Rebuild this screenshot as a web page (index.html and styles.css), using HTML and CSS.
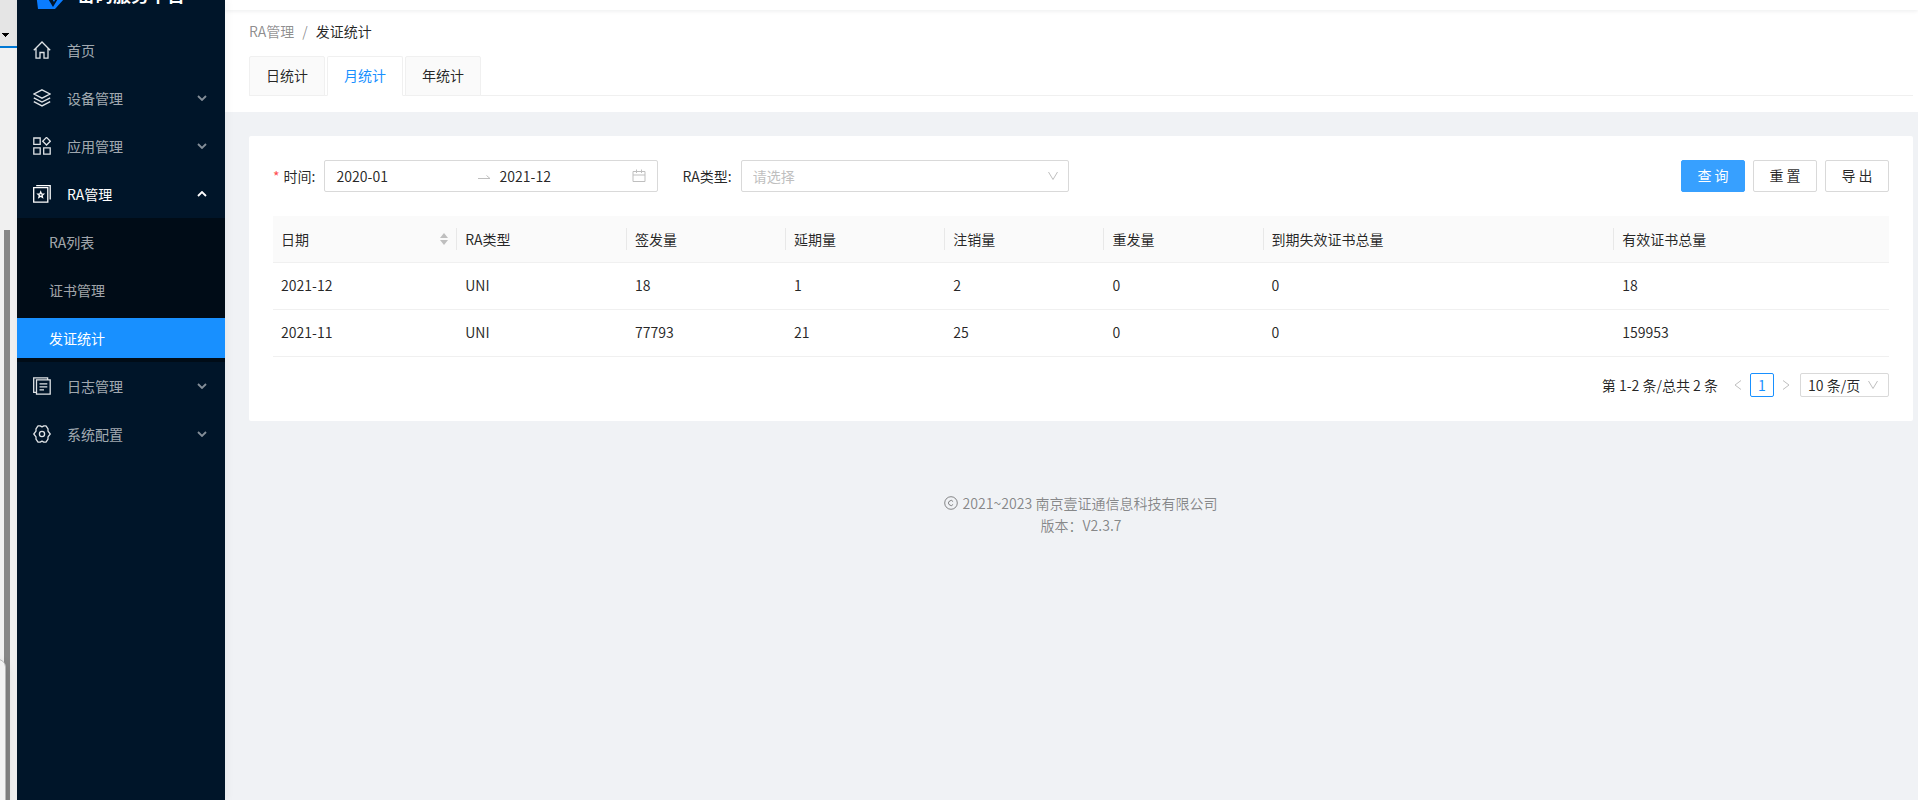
FILE: index.html
```html
<!DOCTYPE html>
<html lang="zh-CN">
<head>
<meta charset="utf-8">
<title>发证统计</title>
<link rel="stylesheet" href="styles.css">
</head>
<body>
<div class="app">
  <div class="edge" aria-hidden="true">
    <div class="edge-top"><svg width="7" height="4" viewBox="0 0 7 4" shape-rendering="crispEdges"><path d="M0 0h7v1H6v1H5v1H4v1H3V3H2V2H1V1H0z"/></svg></div>
    <div class="edge-body"><div class="edge-thumb"></div><div class="edge-panel"></div></div>
  </div>

  <aside class="sider">
    <div class="brand">
      <svg width="30" height="30" viewBox="0 0 30 30"><path fill="#0a7cff" d="M0 6 15 0l14 6v14l-9 10H3z"/><path fill="#00152a" d="M12 18l6 10 6-10-3 1-2 4-3-5z"/></svg>
      <span class="brand-name">密码服务平台</span>
    </div>
    <nav class="menu">
      <a class="item" href="#"><svg class="ico" viewBox="0 0 18 18"><path d="M.8 9.300 9 1l8.200 8.300M3 7.500v9.700h4v-5.700h4v5.700h4V7.500"/></svg><span>首页</span></a>
      <a class="item" href="#"><svg class="ico" viewBox="0 0 18 18"><path d="M9 .8 17 5 9 9.200 1 5zM.8 8.800 9 13l8.200-4.200M.8 12.600 9 16.900l8.200-4.300"/></svg><span>设备管理</span><svg class="chev" viewBox="0 0 10 6"><path d="M1 1l4 4 4-4"/></svg></a>
      <a class="item" href="#"><svg class="ico" viewBox="0 0 18 18"><path d="M.8 1h6.400v6.400H.8zM.8 10.800h6.400v6.400H.8zM10.700 10.800h6.500v6.400h-6.500zM13.500.4 17.300 4.200 13.500 8 9.700 4.200z"/></svg><span>应用管理</span><svg class="chev" viewBox="0 0 10 6"><path d="M1 1l4 4 4-4"/></svg></a>
      <a class="item open" href="#"><svg class="ico" viewBox="0 0 18 18"><path d="M.7 2.700h14.100v14.500H.7zM3.200.7h14v13.800"/><path d="M7.700 7l.8 1.900 2 .2-1.500 1.300.5 2-1.800-1.100-1.800 1.100.5-2L4.900 9.100l2-.2z"/></svg><span>RA管理</span><svg class="chev" viewBox="0 0 10 6"><path d="M1 5l4-4 4 4"/></svg></a>
      <div class="submenu">
        <a class="item" href="#">RA列表</a>
        <a class="item" href="#">证书管理</a>
        <a class="item selected" href="#" aria-current="page">发证统计</a>
      </div>
      <a class="item" href="#"><svg class="ico" viewBox="0 0 18 18"><path d="M3.500 2.900h13.700v14.300H3.500zM3.500 15.300H.7V.8h13.900v2M6.500 6.900h7.800M6.500 9.900h7.800M6.500 12.900h4.500"/></svg><span>日志管理</span><svg class="chev" viewBox="0 0 10 6"><path d="M1 1l4 4 4-4"/></svg></a>
      <a class="item" href="#"><svg class="ico" viewBox="0 0 18 18"><path d="M5 .9h2.200L9 1.900l1.800-1H13l2 2.900v2.400L17.200 9 15 11.800v2.400L13 17.100h-2.200L9 16.100l-1.800 1H5l-2-2.900v-2.400L.8 9 3 6.200V3.800z" stroke-linejoin="round"/><circle cx="9" cy="9" r="2.600"/></svg><span>系统配置</span><svg class="chev" viewBox="0 0 10 6"><path d="M1 1l4 4 4-4"/></svg></a>
    </nav>
  </aside>

  <div class="main">
    <header class="topbar"></header>
    <div class="page-head">
      <nav class="crumbs" aria-label="breadcrumb"><a href="#">RA管理</a><span class="sep">/</span><span class="here">发证统计</span></nav>
      <div class="tabs" role="tablist">
        <button class="tab" role="tab">日统计</button>
        <button class="tab active" role="tab" aria-selected="true">月统计</button>
        <button class="tab" role="tab">年统计</button>
      </div>
    </div>

    <main class="card">
      <form class="filters">
        <div class="field">
          <label for="from"><span class="req">*</span>时间:</label>
          <div class="range">
            <input id="from" type="text" value="2020-01">
            <svg class="arrow" width="14" height="14" viewBox="0 0 14 14"><path d="M1 9.500h12L9.500 6.500"/></svg>
            <input type="text" value="2021-12" aria-label="结束时间">
            <svg class="cal" width="14" height="14" viewBox="0 0 14 14"><path d="M1 2.500h12v10H1zM1 6h12M4.500.5v3.500M9.500.5v3.500"/></svg>
          </div>
        </div>
        <div class="field">
          <label for="type">RA类型:</label>
          <div class="pick">
            <select id="type"><option>请选择</option></select>
            <svg width="12" height="12" viewBox="0 0 12 12"><path d="M1.500 2 6 9.500 10.500 2"/></svg>
          </div>
        </div>
        <div class="actions">
          <button class="btn primary" type="button">查 询</button>
          <button class="btn" type="button">重 置</button>
          <button class="btn" type="button">导 出</button>
        </div>
      </form>

      <table class="grid">
        <colgroup><col class="c-date"><col class="c-type"><col class="c-num"><col class="c-num"><col class="c-num"><col class="c-num"><col class="c-exp"><col class="c-valid"></colgroup>
        <thead>
          <tr>
            <th><div class="cell">日期<svg width="8" height="12" viewBox="0 0 8 12"><path d="M4 0l4 5H0zM4 12l4-5H0z"/></svg></div></th>
            <th><div class="cell">RA类型</div></th><th><div class="cell">签发量</div></th><th><div class="cell">延期量</div></th><th><div class="cell">注销量</div></th><th><div class="cell">重发量</div></th><th><div class="cell">到期失效证书总量</div></th><th><div class="cell">有效证书总量</div></th>
          </tr>
        </thead>
        <tbody>
          <tr><td>2021-12</td><td>UNI</td><td>18</td><td>1</td><td>2</td><td>0</td><td>0</td><td>18</td></tr>
          <tr><td>2021-11</td><td>UNI</td><td>77793</td><td>21</td><td>25</td><td>0</td><td>0</td><td>159953</td></tr>
        </tbody>
      </table>

      <div class="pager">
        <span class="total">第 1-2 条/总共 2 条</span>
        <button class="step" type="button" aria-label="上一页"><svg width="8" height="12" viewBox="0 0 8 12"><path d="M7 1.500 1 6l6 4.500"/></svg></button>
        <button class="num" type="button" aria-current="page">1</button>
        <button class="step" type="button" aria-label="下一页"><svg width="8" height="12" viewBox="0 0 8 12"><path d="M1 1.500 7 6l-6 4.500"/></svg></button>
        <div class="pick small">
          <select aria-label="每页条数"><option>10 条/页</option></select>
          <svg width="12" height="12" viewBox="0 0 12 12"><path d="M1.500 2 6 9.500 10.500 2"/></svg>
        </div>
      </div>
    </main>

    <footer class="foot">
      <div class="copy"><svg width="14" height="14" viewBox="0 0 14 14"><circle cx="7" cy="7" r="6.300"/><path d="M9.100 5.600A2.500 2.500 0 1 0 9.100 8.400"/></svg><span>2021~2023 南京壹证通信息科技有限公司</span></div>
      <div>版本：V2.3.7</div>
    </footer>
  </div>
</div>
</body>
</html>
```

FILE: styles.css
```css
* { box-sizing: border-box; }
body {
  margin: 0;
  background: #f0f2f5;
  color: rgba(0, 0, 0, .85);
  font: 14px/22px "Noto Sans CJK SC", sans-serif;
}
button, input, select { font: inherit; color: inherit; margin: 0; }
a { color: inherit; text-decoration: none; }
svg { flex: none; fill: none; stroke: currentColor; }

.app { display: flex; min-height: 100vh; overflow: hidden; }

/* window edge */
.edge { display: flex; flex-direction: column; width: 17px; background: #f0f0f0; }
.edge-top { height: 48px; padding: 31px 0 0 2px; background: #e5e5e5; border-bottom: 2px solid #0078d4; line-height: 0; }
.edge-top svg { fill: #000; stroke: none; }
.edge-body { position: relative; flex: 1; padding: 182px 0 0 4px; display: flex; overflow: hidden; }
.edge-thumb { width: 6px; background: #868686; }
.edge-panel {
  position: absolute; right: 11px; top: 611px; bottom: -8px; width: 24px;
  background: #f3f3f3; border: 1px solid #b8b8b8; border-radius: 8px;
  box-shadow: 0 4px 10px rgba(0, 0, 0, .16);
}

/* sidebar */
.sider { position: relative; z-index: 2; flex: none; width: 208px; background: #001529; box-shadow: 2px 0 8px rgba(29, 35, 41, .05); }
.brand { display: flex; align-items: center; gap: 12px; height: 32px; margin-top: -22px; padding-left: 18px; color: #fff; }
.brand svg { stroke: none; }
.brand-name { font-size: 18px; font-weight: 700; white-space: nowrap; }
.menu { padding-top: 16px; color: rgba(255, 255, 255, .65); }
.item { display: flex; align-items: center; gap: 16px; height: 40px; margin: 4px 0 8px; padding: 0 18px 0 16px; }
.ico { width: 18px; height: 18px; color: #dfe3e6; stroke-width: 1.300; }
.chev { width: 10px; height: 6px; margin-left: auto; stroke-width: 1.800; opacity: .8; }
.open { color: #fff; margin-bottom: 4px; }
.open .ico { color: #fff; }
.open .chev { opacity: 1; }
.submenu { background: #000c17; padding: 4px 0; margin-bottom: 4px; display: grid; gap: 8px; }
.submenu .item { margin: 0; padding-left: 32px; }
.submenu .selected { background: #1890ff; color: #fff; }

/* page */
.main { flex: 1; min-width: 0; }
.topbar { position: relative; height: 10px; background: #fff; box-shadow: 0 1px 4px rgba(0, 21, 41, .08); }
.page-head { padding: 10px 5px 16px 24px; background: #fff; }
.crumbs { display: flex; gap: 8px; color: rgba(0, 0, 0, .45); }
.here { color: rgba(0, 0, 0, .85); }
.tabs { display: flex; gap: 2px; margin-top: 14px; box-shadow: inset 0 -1px #f0f0f0; }
.tab { height: 40px; padding: 0 16px 2px; background: #fafafa; border: 1px solid #f0f0f0; border-radius: 2px 2px 0 0; }
.active { background: #fff; border-bottom-color: #fff; color: #1890ff; }

.card { margin: 24px 5px 0 24px; padding: 24px; background: #fff; border-radius: 2px; }
.filters { display: flex; gap: 24px; margin-bottom: 24px; }
.field { display: flex; align-items: center; gap: 9px; }
.req { margin-right: 4px; color: #ff4d4f; }
.range { display: flex; align-items: center; width: 334px; height: 32px; padding: 0 11px; border: 1px solid #d9d9d9; border-radius: 2px; }
.range input { flex: 1; min-width: 0; padding: 0; border: 0; background: none; outline: 0; }
.arrow { margin: 0 8px; color: #bfbfbf; }
.cal { color: #bfbfbf; }
.pick { position: relative; width: 328px; }
.pick select { width: 100%; height: 32px; padding: 0 11px; appearance: none; background: #fff; border: 1px solid #d9d9d9; border-radius: 2px; color: #bfbfbf; }
.pick svg { position: absolute; right: 10px; top: 50%; margin-top: -6px; color: #bfbfbf; pointer-events: none; }
.actions { display: flex; gap: 8px; margin-left: auto; }
.btn { width: 64px; height: 32px; padding: 0 0 2px; background: #fff; border: 1px solid #d9d9d9; border-radius: 2px; }
.primary { background: #37a0ff; border-color: #37a0ff; color: #fff; }

.grid { width: 100%; table-layout: fixed; border-collapse: separate; border-spacing: 0; }
.c-date { width: 11.400%; }
.c-type { width: 10.500%; }
.c-num { width: 9.850%; }
.c-exp { width: 21.700%; }
.c-valid { width: 17%; }
.grid th, .grid td { height: 47px; padding: 0 8px 2px; text-align: left; border-bottom: 1px solid #f0f0f0; }
.grid th { padding: 0; background: #fafafa; font-weight: 400; }
.cell { display: flex; align-items: center; justify-content: space-between; padding: 0 8px; border-right: 1px solid #e8e8e8; }
.grid th:last-child .cell { border-right: 0; }
.cell svg { fill: #bfbfbf; stroke: none; }

.pager { display: flex; justify-content: flex-end; align-items: center; margin-top: 16px; }
.total { margin-right: 8px; }
.step { display: flex; align-items: center; justify-content: center; width: 24px; height: 24px; padding: 0; border: 0; background: none; color: #bfbfbf; }
.num { width: 24px; height: 24px; padding: 0; line-height: 22px; background: #fff; border: 1px solid #1890ff; border-radius: 2px; color: #1890ff; }
.small { width: 89px; margin-left: 2px; }
.small select { display: block; height: 24px; padding: 0 7px; color: rgba(0, 0, 0, .85); line-height: 22px; }

.foot { padding: 71px 5px 24px 24px; text-align: center; color: rgba(0, 0, 0, .45); }
.copy { display: flex; align-items: center; justify-content: center; gap: 4px; }
```
